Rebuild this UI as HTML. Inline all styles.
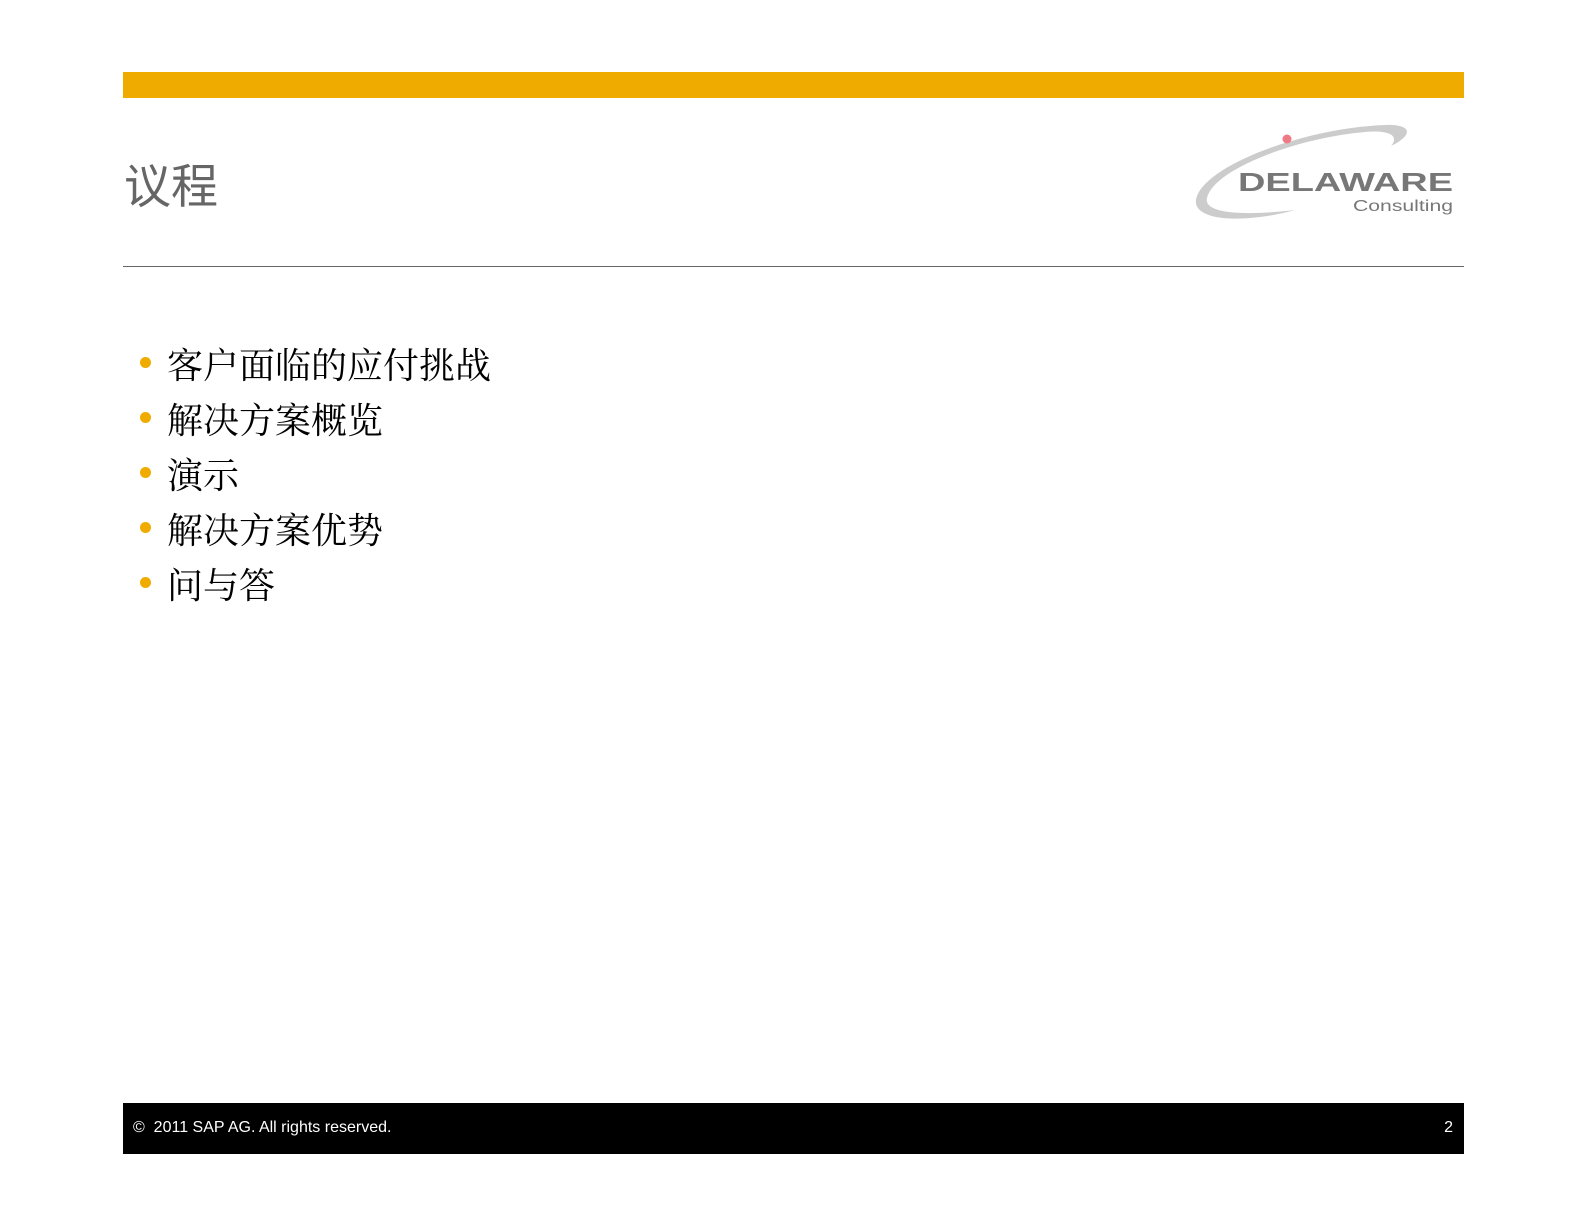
<!DOCTYPE html>
<html><head><meta charset="utf-8"><style>
html,body{margin:0;padding:0;background:#fff;}
body{width:1587px;height:1226px;position:relative;overflow:hidden;}
.bar{position:absolute;left:123px;top:72px;width:1341px;height:26px;background:#f0ab00;}
.title{position:absolute;left:124px;top:153px;font:47px "Noto Sans CJK SC","WenQuanYi Zen Hei",sans-serif;color:#666;line-height:60px;}
.rule{position:absolute;left:123px;top:266px;width:1341px;height:1px;background:#666;}
.list{position:absolute;left:140px;top:338px;}
.item{height:55px;line-height:48px;font:36px "Liberation Serif","Noto Serif CJK SC",serif;color:#000;position:relative;padding-left:27px;}
.item::before{content:"";position:absolute;left:0;top:19px;width:11px;height:11px;border-radius:50%;background:#f0ab00;}
.foot{position:absolute;left:123px;top:1103px;width:1341px;height:51px;background:#000;color:#fff;font:16px "Liberation Sans",sans-serif;}
.foot .l{position:absolute;left:10px;top:16px;}
.foot .r{position:absolute;right:11px;top:16px;}
</style></head><body>
<div class="bar"></div>
<div class="title">议程</div>
<svg style="position:absolute;left:1170px;top:110px" width="290" height="120" viewBox="0 0 290 120">
<path fill="#cccccc" transform="translate(15,2)" d="M110 98 C60 112, 2 110, 12 84 C24 52, 120 16, 200 13 C226 12, 230 22, 206 34 C216 22, 200 18, 180 20 C110 26, 28 58, 22 86 C18 102, 60 104, 110 98 Z"/>
<circle cx="117" cy="29" r="4.5" fill="#ee7a85"/>
<text x="68" y="81" font-family="Liberation Sans,sans-serif" font-weight="bold" font-size="26" fill="#777" textLength="215" lengthAdjust="spacingAndGlyphs">DELAWARE</text>
<text x="183" y="101" font-family="Liberation Sans,sans-serif" font-size="16" fill="#777" textLength="100" lengthAdjust="spacingAndGlyphs">Consulting</text>
</svg>
<div class="rule"></div>
<div class="list">
<div class="item">客户面临的应付挑战</div>
<div class="item">解决方案概览</div>
<div class="item">演示</div>
<div class="item">解决方案优势</div>
<div class="item">问与答</div>
</div>
<div class="foot"><span class="l">©&nbsp; 2011 SAP AG. All rights reserved.</span><span class="r">2</span></div>
</body></html>
